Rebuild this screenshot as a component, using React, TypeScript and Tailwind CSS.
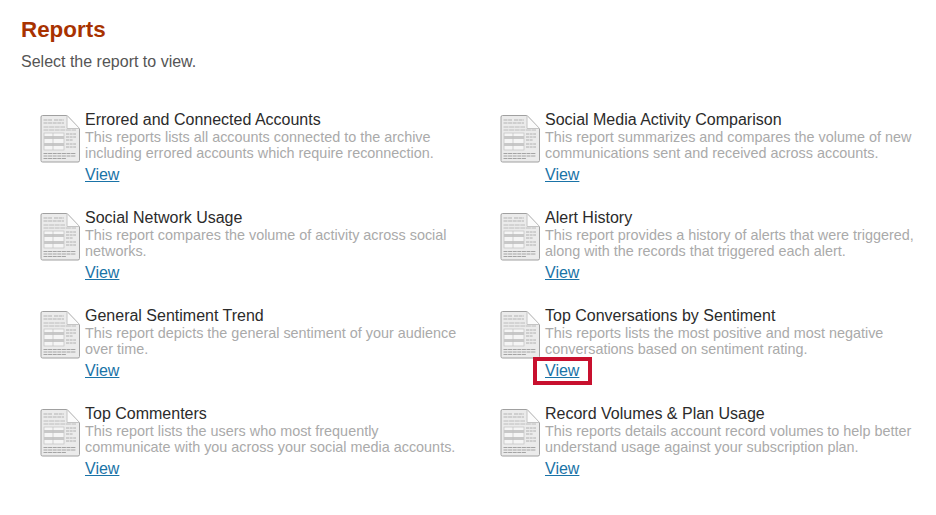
const reports = [
  { title: 'Errored and Connected Accounts', lines: ['This reports lists all accounts connected to the archive', 'including errored accounts which require reconnection.'] },
  { title: 'Social Media Activity Comparison', lines: ['This report summarizes and compares the volume of new', 'communications sent and received across accounts.'] },
  { title: 'Social Network Usage', lines: ['This report compares the volume of activity across social', 'networks.'] },
  { title: 'Alert History', lines: ['This report provides a history of alerts that were triggered,', 'along with the records that triggered each alert.'] },
  { title: 'General Sentiment Trend', lines: ['This report depicts the general sentiment of your audience', 'over time.'] },
  { title: 'Top Conversations by Sentiment', lines: ['This reports lists the most positive and most negative', 'conversations based on sentiment rating.'], highlight: true },
  { title: 'Top Commenters', lines: ['This report lists the users who most frequently', 'communicate with you across your social media accounts.'] },
  { title: 'Record Volumes & Plan Usage', lines: ['This reports details account record volumes to help better', 'understand usage against your subscription plan.'] },
];

function ReportIcon() {
  return (
    <svg width="40" height="48" viewBox="0 0 40 48">
      <path d="M1 2a1.5 1.5 0 0 1 1.5-1.5H27L39.5 13.5V45.5a1.5 1.5 0 0 1-1.5 1.5H2.5A1.5 1.5 0 0 1 1 45.5Z" fill="#ebebeb" stroke="#a0a0a0" />
      <path d="M27 .5V13.5H39.5Z" fill="#fbfbfb" stroke="#c4c4c4" />
      <path d="M3.5 5H12M14 5H24M3.5 8H24" stroke="#b4b4b4" strokeWidth="1.2" strokeDasharray="4 .6" />
      <path d="M3.5 12H25M3.5 15H36" stroke="#bcbcbc" strokeWidth="1" strokeDasharray="5 .6" />
      <rect x="4" y="18" width="20" height="17" fill="#f5f5f5" stroke="#c0c0c0" strokeWidth="0.7" />
      <rect x="4" y="21" width="20" height="3" fill="#c8c8c8" />
      <rect x="4" y="28" width="20" height="3" fill="#c8c8c8" />
      <path d="M13 18V35" stroke="#c0c0c0" strokeWidth="0.7" />
      <path d="M26 19H36M26 22H36M26 25H33M26 29H36M26 32H36" stroke="#b0b0b0" strokeWidth="1" strokeDasharray="3 .6" />
      <path d="M3.5 38.5H36M3.5 41H36M3.5 43.5H26" stroke="#a4a4a4" strokeWidth="1" strokeDasharray="4 .6" />
    </svg>
  );
}

export default function App() {
  return (
    <main className="w-[936px] h-[515px] overflow-hidden bg-white pl-[21px] pt-[17px] font-['Liberation_Sans',Arial,sans-serif]">
      <h1 className="text-[22.4px] leading-[26px] font-bold text-[#a83200]">Reports</h1>
      <p className="mt-[9px] text-base leading-[20px] text-[#555]">Select the report to view.</p>
      <div className="mt-[39px] ml-[19px] grid grid-cols-[460px_376px] auto-rows-[98px]">
        {reports.map((r) => (
          <div key={r.title} className="flex">
            <div className="w-[45px] shrink-0 pt-[4px]">
              <ReportIcon />
            </div>
            <div>
              <h2 className="text-base leading-[18px] text-[#2b2b2b] whitespace-nowrap">{r.title}</h2>
              <p className="text-[14.4px] leading-[16px] text-[#aaa] whitespace-nowrap">
                {r.lines[0]}
                <br />
                {r.lines[1]}
              </p>
              <div className="relative mt-[4px] w-fit">
                <a href="#" className="block text-base leading-[20px] text-[#1a73a7] underline">View</a>
                {r.highlight && (
                  <div className="absolute -left-[12px] -right-[13px] -top-[4px] -bottom-[4px] border-4 border-[#c8102e]" />
                )}
              </div>
            </div>
          </div>
        ))}
      </div>
    </main>
  );
}
